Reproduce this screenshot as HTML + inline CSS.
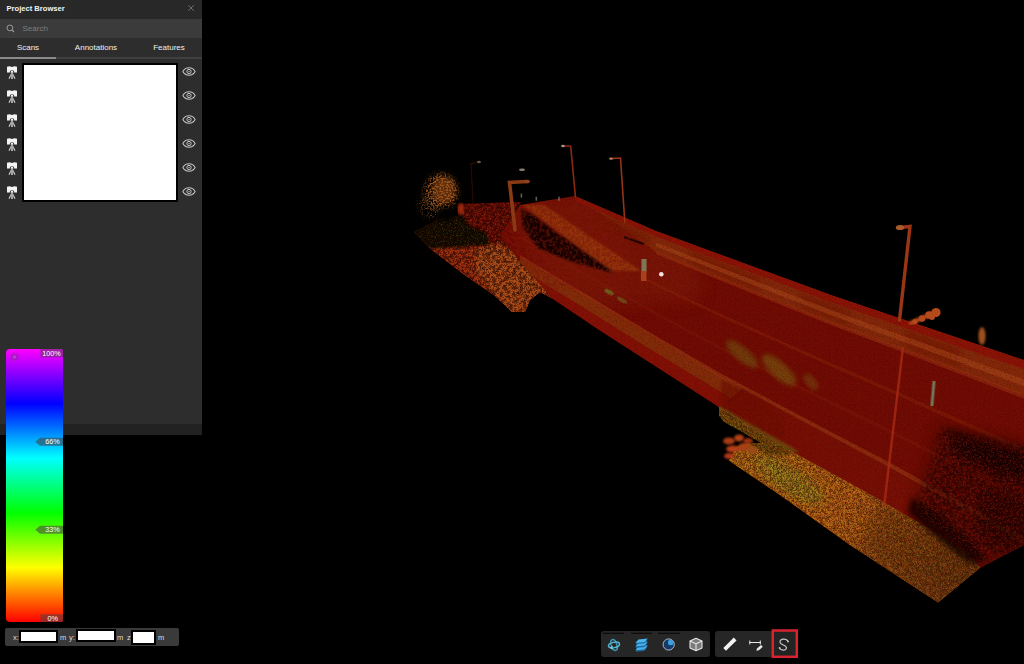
<!DOCTYPE html>
<html>
<head>
<meta charset="utf-8">
<title>Point Cloud Viewer</title>
<style>
html,body{margin:0;padding:0;background:#000;}
body{width:1024px;height:664px;overflow:hidden;position:relative;font-family:"Liberation Sans",sans-serif;color:#fff;}
#scene{position:absolute;left:0;top:0;width:1024px;height:664px;}
#panel{position:absolute;left:0;top:0;width:202px;height:435px;background:#2d2d2d;}
#ptitle{position:absolute;left:6.5px;top:3.7px;font-size:7.6px;font-weight:bold;color:#f2f2f2;line-height:10px;white-space:nowrap;}
#pclose{position:absolute;left:187px;top:3.7px;width:8px;height:8px;}
#psearch{position:absolute;left:0;top:18.5px;width:202px;height:19px;background:#3b3b3b;}
#psearch span{position:absolute;left:22.5px;top:5.2px;font-size:8px;line-height:10px;color:#7d7d7d;}
#ptabs{position:absolute;left:0;top:38px;width:202px;height:20px;}
#ptabs span{position:absolute;top:5px;font-size:8px;line-height:10px;color:#f0f0f0;white-space:nowrap;transform:translateX(-50%);}
#ptabline{position:absolute;left:0;top:57px;width:202px;height:2px;background:#404040;}
#ptabsel{position:absolute;left:0;top:57px;width:56px;height:2px;background:#8a8a8a;}
#pbox{position:absolute;left:22.1px;top:63.2px;width:152px;height:134.500px;background:#fff;border:2.300px solid #000;}
#pfoot{position:absolute;left:0;top:424px;width:202px;height:11px;background:#222;}
.scan{position:absolute;left:6px;width:12px;height:14px;}
.eye{position:absolute;left:182px;width:14px;height:9px;}
#cbar{position:absolute;left:5.5px;top:348.5px;width:57.5px;height:273.5px;border-radius:4px 2px 2px 4px;overflow:hidden;
background:linear-gradient(to bottom,#ff00ff 0%,#0000ff 20%,#00ffff 40%,#00ff00 60%,#ffff00 80%,#ff0000 100%);}
.clab{position:absolute;right:0;font-size:7px;line-height:8px;color:#fff;white-space:nowrap;}
#coords{position:absolute;left:4.5px;top:628.3px;width:174.5px;height:17.6px;background:#3a3a3a;border-radius:2px;font-size:7.5px;color:#ddd;}
#coords span{position:absolute;top:5px;line-height:9px;}
#coords i{position:absolute;display:block;background:#fff;border:2px solid #000;}
.tg{position:absolute;top:630.5px;height:26.3px;background:#262626;border-radius:3px;}
</style>
</head>
<body>
<svg id="scene" width="1024" height="664" viewBox="0 0 1024 664">
<!--SCENE-->

<defs>
<filter id="sp1" x="380" y="120" width="644" height="500" filterUnits="userSpaceOnUse">
  <feTurbulence type="fractalNoise" baseFrequency="0.85" numOctaves="2" seed="3" result="n"/>
  <feColorMatrix in="n" type="matrix" values="0 0 0 0 0  0 0 0 0 0  0 0 0 0 0  5 0 0 0 -2.6" result="a"/>
  <feComposite in="SourceGraphic" in2="a" operator="in"/>
  <feGaussianBlur stdDeviation="0.6"/>
</filter>
<filter id="sp2" x="380" y="120" width="644" height="500" filterUnits="userSpaceOnUse">
  <feTurbulence type="fractalNoise" baseFrequency="0.8" numOctaves="2" seed="11" result="n"/>
  <feColorMatrix in="n" type="matrix" values="0 0 0 0 0  0 0 0 0 0  0 0 0 0 0  6 0 0 0 -2.9" result="a"/>
  <feComposite in="SourceGraphic" in2="a" operator="in"/>
  <feGaussianBlur stdDeviation="0.6"/>
</filter>
<filter id="sp3" x="380" y="120" width="644" height="500" filterUnits="userSpaceOnUse">
  <feTurbulence type="fractalNoise" baseFrequency="0.75" numOctaves="2" seed="21" result="n"/>
  <feColorMatrix in="n" type="matrix" values="0 0 0 0 0  0 0 0 0 0  0 0 0 0 0  6 0 0 0 -3.0" result="a"/>
  <feComposite in="SourceGraphic" in2="a" operator="in"/>
  <feGaussianBlur stdDeviation="0.6"/>
</filter>
<filter id="sp4" x="380" y="120" width="644" height="500" filterUnits="userSpaceOnUse">
  <feTurbulence type="fractalNoise" baseFrequency="0.6" numOctaves="2" seed="5" result="n"/>
  <feColorMatrix in="n" type="matrix" values="0 0 0 0 0  0 0 0 0 0  0 0 0 0 0  5 0 0 0 -2.2" result="a"/>
  <feComposite in="SourceGraphic" in2="a" operator="in"/>
  <feGaussianBlur stdDeviation="0.6"/>
</filter>
<filter id="sp5" x="380" y="120" width="644" height="500" filterUnits="userSpaceOnUse">
  <feTurbulence type="fractalNoise" baseFrequency="0.3" numOctaves="3" seed="9" result="n"/>
  <feColorMatrix in="n" type="matrix" values="0 0 0 0 0  0 0 0 0 0  0 0 0 0 0  7 0 0 0 -3.2" result="a"/>
  <feComposite in="SourceGraphic" in2="a" operator="in"/>
  <feGaussianBlur stdDeviation="0.6"/>
</filter>
<filter id="b1"><feGaussianBlur stdDeviation="1"/></filter>
<filter id="b05"><feGaussianBlur stdDeviation=".55"/></filter>
<filter id="b2"><feGaussianBlur stdDeviation="2.5"/></filter>
<filter id="b4"><feGaussianBlur stdDeviation="5"/></filter>
<filter id="b8"><feGaussianBlur stdDeviation="8"/></filter>
<linearGradient id="vegg" gradientUnits="userSpaceOnUse" x1="740" y1="440" x2="960" y2="585">
  <stop offset="0" stop-color="#aa7618"/><stop offset=".45" stop-color="#b86a16"/><stop offset="1" stop-color="#764a12"/>
</linearGradient>
<clipPath id="roadclip"><polygon points="575.0,196.0 656.0,231.0 831.0,295.0 1024.0,360.0 1024.0,545.0 980.5,567.5 938.0,602.5 850.0,545.0 780.0,495.0 739.0,467.5 721.0,455.0 721.0,422.5 719.0,407.0 600.0,330.5 553.0,299.0 520.0,262.0 500.0,235.0 520.0,205.0"/></clipPath>
<clipPath id="vegclip"><polygon points="719.0,407.0 767.0,438.0 824.0,469.0 882.0,501.0 933.0,531.0 969.0,554.0 980.5,567.5 938.0,602.5 850.0,545.0 780.0,495.0 739.0,467.5 721.0,455.0"/></clipPath>
<clipPath id="leftclip"><polygon points="458.0,204.0 521.0,202.0 500.0,235.0 520.0,262.0 553.0,299.0 540.0,292.0 530.0,300.0 525.0,312.0 512.0,312.0 495.0,296.0 462.5,273.5 430.0,248.5 414.0,232.0 440.0,219.0 458.0,216.0"/></clipPath>
</defs>

<polygon points="575.0,196.0 656.0,231.0 831.0,295.0 1024.0,360.0 1024.0,545.0 980.5,567.5 938.0,602.5 850.0,545.0 780.0,495.0 739.0,467.5 721.0,455.0 721.0,422.5 719.0,407.0 600.0,330.5 553.0,299.0 520.0,262.0 500.0,235.0 520.0,205.0" fill="#6c0a03"/>
<g clip-path="url(#roadclip)">
<polygon points="500.0,196.0 700.0,196.0 700.0,300.0 560.0,310.0" fill="#842008" opacity=".4" filter="url(#b8)"/>
<polygon points="575.0,196.0 600.0,206.8 656.0,231.0 719.0,254.0 780.0,276.3 831.0,295.0 882.0,312.2 940.0,331.7 969.0,341.5 1024.0,360.0 1024.0,395.3 969.0,374.4 940.0,363.4 882.0,341.4 831.0,322.4 780.0,302.1 719.0,277.7 656.0,252.0 620.0,226.0 590.0,207.0 575.0,198.0" fill="#80280a"/>
<polygon points="600.0,213.0 625.0,224.1 650.0,235.1 650.0,247.2 625.0,235.7 600.0,224.1" fill="#6e1405" opacity=".55" filter="url(#b2)"/>
<polygon points="690.0,250.7 725.0,263.9 760.0,277.1 760.0,291.7 725.0,277.8 690.0,263.7" fill="#6e1405" opacity=".55" filter="url(#b2)"/>
<polygon points="800.0,292.2 825.0,301.6 850.0,310.5 850.0,326.8 825.0,317.4 800.0,307.5" fill="#6e1405" opacity=".55" filter="url(#b2)"/>
<polygon points="905.0,329.7 932.5,339.3 960.0,348.9 960.0,367.9 932.5,357.5 905.0,347.2" fill="#6e1405" opacity=".55" filter="url(#b2)"/>
<polygon points="575.0,196.0 600.0,206.8 656.0,231.0 719.0,254.0 780.0,276.3 831.0,295.0 882.0,312.2 940.0,331.7 969.0,341.5 1024.0,360.0 1024.0,369.1 969.0,350.0 940.0,339.9 882.0,319.7 831.0,302.1 780.0,283.0 719.0,260.2 656.0,236.4 600.0,211.8 575.0,200.7" fill="#881206"/>
<polygon points="656.0,242.5 719.0,267.0 780.0,290.4 831.0,310.0 882.0,328.2 940.0,349.1 969.0,359.5 1024.0,379.4 1024.0,386.2 969.0,365.9 940.0,355.2 882.0,333.9 831.0,315.3 780.0,295.4 719.0,271.6 656.0,246.6" fill="#a8481a" opacity=".55" filter="url(#b05)"/>
<polygon points="656.0,251.3 719.0,277.0 780.0,301.2 831.0,321.5 882.0,340.5 940.0,362.4 969.0,373.4 1024.0,394.2 1024.0,398.8 969.0,377.6 940.0,366.5 882.0,344.3 831.0,325.0 780.0,304.5 719.0,280.0 656.0,254.0" fill="#a03a12" opacity=".5" filter="url(#b05)"/>
<polygon points="640.0,275.0 656.0,283.2 719.0,312.9 780.0,340.2 831.0,363.0 882.0,384.9 940.0,410.5 969.0,423.3 1024.0,447.8 1024.0,452.3 969.0,427.5 940.0,414.6 882.0,388.6 831.0,366.5 780.0,343.5 719.0,316.0 656.0,285.9 640.0,277.6" fill="#8c280c" opacity=".45" filter="url(#b05)"/>
<polygon points="745.0,390.3 780.0,409.0 831.0,436.3 882.0,463.2 940.0,495.4 969.0,511.5 1024.0,542.4 1024.0,592.6 969.0,558.3 940.0,540.4 882.0,504.8 831.0,475.1 780.0,445.5 719.0,410.1" fill="#740e05" opacity=".9"/>
<polygon points="520.0,257.8 540.0,269.8 575.0,290.8 600.0,305.8 656.0,339.4 742.0,388.7 731.0,398.4 656.0,353.0 600.0,318.2 575.0,302.6 540.0,280.9 520.0,268.5" fill="#84320b" opacity=".85"/>
<polygon points="520.0,268.5 540.0,280.9 575.0,302.6 600.0,318.2 656.0,353.0 731.0,398.4 719.0,410.1 656.0,369.2 600.0,333.0 575.0,316.9 540.0,294.2 520.0,281.3" fill="#800f05"/>
<polygon points="520.0,255.1 540.0,267.0 575.0,287.8 600.0,302.7 656.0,336.0 719.0,372.6 780.0,404.9 831.0,431.9 882.0,458.5 940.0,490.3 969.0,506.2 1024.0,536.7 1024.0,542.4 969.0,511.5 940.0,495.4 882.0,463.2 831.0,436.3 780.0,409.0 719.0,376.4 656.0,339.4 600.0,305.8 575.0,290.8 540.0,269.8 520.0,257.8" fill="#a04416" opacity=".55" filter="url(#b05)"/>
<polygon points="520.0,236.4 540.0,247.6 575.0,267.1 600.0,281.0 656.0,312.3 719.0,345.8 780.0,375.8 831.0,401.0 882.0,425.5 940.0,454.5 969.0,469.0 1024.0,496.8 1024.0,501.4 969.0,473.2 940.0,458.6 882.0,429.2 831.0,404.5 780.0,379.2 719.0,348.9 656.0,315.0 600.0,283.5 575.0,269.5 540.0,249.8 520.0,238.5" fill="#8c280c" opacity=".25" filter="url(#b05)"/>
<polygon points="719.0,405.0 745.0,420.0 782.0,441.0 800.0,452.0 770.0,452.0 740.0,436.0 719.0,424.0" fill="#6a4a10" opacity=".9" filter="url(#b1)"/>
<polygon points="722.0,380.0 760.0,398.0 784.0,420.0 782.0,441.0 745.0,420.0 719.0,405.0" fill="#6a0d04" opacity=".6" filter="url(#b1)"/>
<polygon points="523.0,205.0 544.0,205.0 641.0,271.0 609.0,271.0" fill="#9a3c10" opacity=".8" filter="url(#b1)"/>
<ellipse cx="742" cy="354" rx="20" ry="7" transform="rotate(40 742 354)" fill="#6e4a10" opacity=".8" filter="url(#b2)"/>
<ellipse cx="779" cy="370" rx="22" ry="8" transform="rotate(42 779 370)" fill="#74500f" opacity=".8" filter="url(#b2)"/>
<ellipse cx="811" cy="382" rx="10" ry="5" transform="rotate(50 811 382)" fill="#74440f" opacity=".7" filter="url(#b2)"/>
<ellipse cx="609" cy="292" rx="5" ry="2.2" transform="rotate(30 609 292)" fill="#6a6a20" opacity=".9" filter="url(#b05)"/>
<ellipse cx="622" cy="300" rx="6" ry="2" transform="rotate(30 622 300)" fill="#6a5a1a" opacity=".8" filter="url(#b05)"/>
<polygon points="624.0,236.0 644.0,243.0 643.0,245.0 624.0,238.0" fill="#150300" filter="url(#b05)"/>
<rect x="480" y="180" width="544" height="440" fill="#4a0803" filter="url(#sp1)" opacity=".3"/>
<rect x="480" y="180" width="544" height="440" fill="#922010" filter="url(#sp2)" opacity=".2"/>
</g>
<polygon points="719.0,407.0 767.0,438.0 824.0,469.0 882.0,501.0 933.0,531.0 969.0,554.0 980.5,567.5 938.0,602.5 850.0,545.0 780.0,495.0 739.0,467.5 721.0,455.0" fill="url(#vegg)" filter="url(#b05)"/>
<g clip-path="url(#vegclip)">
<ellipse cx="790" cy="480" rx="40" ry="12" transform="rotate(33 790 480)" fill="#869020" opacity=".8" filter="url(#b4)"/>
<polygon points="715.0,400.0 782.0,436.0 800.0,452.0 770.0,456.0 740.0,440.0 715.0,428.0" fill="#66500f" filter="url(#b1)"/>
<polygon points="880.0,500.0 969.0,554.0 985.0,570.0 938.0,606.0 860.0,552.0" fill="#1a0c02" opacity=".3" filter="url(#b8)"/>
<rect x="700" y="400" width="324" height="220" fill="#3a1204" filter="url(#sp3)" opacity=".65"/>
<rect x="700" y="400" width="324" height="220" fill="#c08a20" filter="url(#sp1)" opacity=".4"/>
<rect x="700" y="400" width="324" height="220" fill="#8a1a08" filter="url(#sp4)" opacity=".45"/>
<rect x="700" y="400" width="324" height="220" fill="#1a0802" filter="url(#sp5)" opacity=".3"/>
</g>
<polygon points="716.0,412.0 724.0,422.0 742.0,432.0 761.0,443.0 748.0,443.0 736.0,447.0 728.0,462.0 716.0,462.0" fill="#000" filter="url(#b05)"/>
<ellipse cx="729" cy="441" rx="6" ry="3.5" fill="#a83a14" filter="url(#b1)"/>
<ellipse cx="739" cy="438" rx="5" ry="3.5" fill="#b04016" filter="url(#b1)"/>
<ellipse cx="748" cy="441" rx="5" ry="3" fill="#9a3010" filter="url(#b1)"/>
<ellipse cx="733" cy="449" rx="7" ry="3.5" fill="#b43c14" filter="url(#b1)"/>
<ellipse cx="744" cy="447" rx="6" ry="4" fill="#a84018" filter="url(#b1)"/>
<ellipse cx="729" cy="456" rx="5" ry="3" fill="#b03814" filter="url(#b1)"/>
<ellipse cx="752" cy="450" rx="5" ry="4" fill="#9a4a16" filter="url(#b1)"/>
<mask id="dm" maskUnits="userSpaceOnUse" x="860" y="380" width="164" height="240"><polygon points="938.0,428.0 985.0,438.0 1040.0,450.0 1040.0,545.0 980.0,563.0 950.0,541.0 915.0,508.0 925.0,480.0 935.0,455.0" fill="#fff" filter="url(#b4)"/></mask>
<g clip-path="url(#roadclip)">
<polygon points="938.0,428.0 985.0,438.0 1040.0,450.0 1040.0,545.0 980.0,563.0 950.0,541.0 915.0,508.0 925.0,480.0 935.0,455.0" fill="#240401" opacity=".5" filter="url(#b8)"/>
<polygon points="945.0,430.0 1040.0,455.0 1040.0,484.0 995.0,474.0 958.0,454.0" fill="#0a0100" opacity=".85" filter="url(#b4)"/>
<polygon points="912.0,498.0 935.0,510.0 975.0,546.0 988.0,562.0 968.0,562.0 930.0,532.0 908.0,512.0" fill="#0a0100" opacity=".8" filter="url(#b2)"/>
<polygon points="985.0,490.0 1040.0,500.0 1040.0,540.0 1000.0,552.0 975.0,530.0" fill="#0a0100" opacity=".45" filter="url(#b4)"/>
<g mask="url(#dm)"><rect x="860" y="400" width="164" height="200" fill="#8a180a" filter="url(#sp4)" opacity=".5"/>
<rect x="860" y="400" width="164" height="200" fill="#100200" filter="url(#sp5)" opacity=".45"/></g>
</g>
<polygon points="458.0,204.0 521.0,202.0 500.0,235.0 520.0,262.0 553.0,299.0 540.0,292.0 530.0,300.0 525.0,312.0 512.0,312.0 495.0,296.0 462.5,273.5 430.0,248.5 414.0,232.0 440.0,219.0 458.0,216.0" fill="#6c0c04"/>
<g clip-path="url(#leftclip)">
<polygon points="426.0,247.0 490.0,243.0 505.0,250.0 520.0,262.0 553.0,299.0 525.0,313.0 508.0,313.0 490.0,294.0 462.0,274.0" fill="#982a0c"/>
<polygon points="474.0,250.0 500.0,243.0 530.0,262.0 548.0,292.0 527.0,313.0 508.0,313.0 490.0,290.0 476.0,270.0" fill="#a84a16" filter="url(#b2)"/>
<polygon points="400.0,226.0 440.0,212.0 462.0,214.0 470.0,226.0 486.0,232.0 490.0,245.0 426.0,249.0" fill="#0c0702" filter="url(#b1)"/>
<rect x="400" y="190" width="160" height="130" fill="#1c0601" filter="url(#sp3)" opacity=".55"/>
<rect x="400" y="190" width="160" height="130" fill="#c06a22" filter="url(#sp1)" opacity=".3"/>
<rect x="400" y="190" width="160" height="130" fill="#160401" filter="url(#sp5)" opacity=".5"/>
</g>
<ellipse cx="444" cy="190" rx="12" ry="14" fill="#7a3a10" opacity=".75" filter="url(#b2)"/>
<g filter="url(#sp4)"><ellipse cx="441" cy="192" rx="17" ry="19" fill="#9a521c" filter="url(#b2)"/></g>
<g filter="url(#sp1)"><ellipse cx="430" cy="205" rx="12" ry="14" fill="#6a3c14" filter="url(#b2)"/></g>
<ellipse cx="446" cy="214" rx="7" ry="8" fill="#000" opacity=".9" filter="url(#b2)"/>
<ellipse cx="461" cy="209" rx="3" ry="6" fill="#a02a10" opacity=".9" filter="url(#b1)"/>
<polygon points="521.0,209.0 530.0,213.0 560.0,235.0 609.0,269.0 613.0,273.0 570.0,261.0 539.0,249.0 523.0,228.0" fill="#0e0200" opacity=".92" filter="url(#b1)"/>
<g clip-path="url(#roadclip)"><rect x="500" y="200" width="130" height="90" fill="#7a1808" filter="url(#sp5)" opacity=".5"/></g>
<path d="M575.4 196.4 L570.7 146.3 L563 146" stroke="#8a2a10" stroke-width="1.6" fill="none" opacity="1" stroke-linecap="round" filter="url(#b05)"/><ellipse cx="563" cy="146" rx="1.92" ry="1.2" fill="#a89080" opacity="1" filter="url(#b05)"/>
<path d="M624.8 222 L620.5 158 L611 158.6" stroke="#963214" stroke-width="1.6" fill="none" opacity="1" stroke-linecap="round" filter="url(#b05)"/><ellipse cx="611" cy="158.6" rx="1.92" ry="1.2" fill="#b08060" opacity="1" filter="url(#b05)"/>
<path d="M473 203 L471 163.5 L479 162" stroke="#2e0c05" stroke-width="1.3" fill="none" opacity="0.8" stroke-linecap="round" filter="url(#b05)"/><ellipse cx="479" cy="162" rx="1.92" ry="1.2" fill="#807060" opacity="0.8" filter="url(#b05)"/>
<path d="M515 230 L509.5 182.5 L527 181.5" stroke="#8a3a16" stroke-width="3.6" fill="none" opacity="1" stroke-linecap="round" filter="url(#b05)"/><ellipse cx="527" cy="181.5" rx="2.8800000000000003" ry="1.8" fill="#924218" opacity="1" filter="url(#b05)"/>
<ellipse cx="522" cy="169.7" rx="3" ry="1.3" fill="#8a8070" filter="url(#b05)"/>
<path d="M899.5 320 L910 226.5 L900 227.5" stroke="#9a3612" stroke-width="3.4" fill="none" opacity="1" stroke-linecap="round" filter="url(#b05)"/><ellipse cx="900" cy="227.5" rx="4.16" ry="2.6" fill="#a85a2a" opacity="1" filter="url(#b05)"/>
<path d="M903 347 L884 507" stroke="#a82a14" stroke-width="2.4" opacity=".8" filter="url(#b05)"/>
<rect x="520.6" y="193.6" width="1.6" height="4" fill="#7a7060" opacity=".8"/>
<rect x="535.5" y="196.7" width="1.6" height="4" fill="#7a7060" opacity=".8"/>
<rect x="558.2" y="196.7" width="1.6" height="4" fill="#7a7060" opacity=".8"/>
<path d="M911 323 L936 312" stroke="#b04618" stroke-width="4.5" stroke-linecap="round" filter="url(#b1)"/>
<circle cx="936" cy="312.5" r="4.6" fill="#b44a1a" filter="url(#b05)"/>
<circle cx="929" cy="315" r="3.8" fill="#b44a1a" filter="url(#b05)"/>
<circle cx="922" cy="318.5" r="3.2" fill="#b44a1a" filter="url(#b05)"/>
<circle cx="915" cy="321.5" r="2.6" fill="#b44a1a" filter="url(#b05)"/>
<circle cx="932" cy="317" r="3" fill="#b44a1a" filter="url(#b05)"/>
<ellipse cx="982" cy="336" rx="3.6" ry="9" fill="#9c501a" filter="url(#b1)"/>
<rect x="931.5" y="381" width="3" height="25" fill="#74745a" transform="rotate(5 933 393)" filter="url(#b05)"/>
<rect x="641.5" y="259" width="5" height="13" fill="#7a7858" filter="url(#b05)"/>
<rect x="641" y="271" width="5.500" height="10" fill="#a8401a" filter="url(#b05)"/>
<circle cx="661.3" cy="274.3" r="2.3" fill="#f4e4e0"/>
<!--/SCENE-->
</svg>

<div id="panel">
  <div style="position:absolute;left:0;top:0;width:202px;height:18.5px;background:#282828"></div>
  <div id="ptitle">Project Browser</div>
  <svg id="pclose" viewBox="0 0 8 8"><path d="M1.2 1.2L6.8 6.8M6.8 1.2L1.2 6.8" stroke="#6c6c6c" stroke-width="1" fill="none"/></svg>
  <div id="psearch">
    <svg style="position:absolute;left:5.5px;top:5.5px" width="9" height="9" viewBox="0 0 9 9"><circle cx="3.9" cy="3.9" r="2.9" stroke="#9a9a9a" stroke-width="1" fill="none"/><path d="M6 6L8 8" stroke="#9a9a9a" stroke-width="1.1"/></svg>
    <span>Search</span>
  </div>
  <div id="ptabs">
    <span style="left:28px">Scans</span>
    <span style="left:96px">Annotations</span>
    <span style="left:169px">Features</span>
  </div>
  <div id="ptabline"></div><div id="ptabsel"></div>
  <div id="pbox"></div>
  <svg class="scan" style="top:65.5px" viewBox="0 0 12 14"><path d="M1 .8 L3.5 .3 L6 1 L8.500 .3 L11 .8 L11 6.600 L1 6.600Z" fill="#f4f4f4"/><path d="M3.700 6.700 A2.300 2.800 0 0 1 8.300 6.700 Z" fill="#444"/><circle cx="6" cy="5.600" r="1.100" fill="#f0f0f0"/><path d="M5.300 6.300 H6.700 V13 H5.300Z" fill="#ddd"/><path d="M5 8.500 L3 12.800 M7 8.500 L9 12.800" stroke="#d0d0d0" stroke-width="1.100" fill="none"/><path d="M4.200 9.300 H7.800" stroke="#999" stroke-width=".8"/></svg>
<svg class="eye" style="top:67px" viewBox="0 0 14 9"><path d="M.9 4.500 C3.400 -.4 10.600 -.4 13.100 4.500 C10.600 9.400 3.400 9.400 .9 4.500Z" stroke="#c4c4c4" stroke-width="1.050" fill="none"/><circle cx="7" cy="4.500" r="2.150" stroke="#c4c4c4" stroke-width="1" fill="none"/><circle cx="7" cy="4.500" r=".7" fill="#c4c4c4"/></svg>
<svg class="scan" style="top:89.5px" viewBox="0 0 12 14"><path d="M1 .8 L3.5 .3 L6 1 L8.500 .3 L11 .8 L11 6.600 L1 6.600Z" fill="#f4f4f4"/><path d="M3.700 6.700 A2.300 2.800 0 0 1 8.300 6.700 Z" fill="#444"/><circle cx="6" cy="5.600" r="1.100" fill="#f0f0f0"/><path d="M5.300 6.300 H6.700 V13 H5.300Z" fill="#ddd"/><path d="M5 8.500 L3 12.800 M7 8.500 L9 12.800" stroke="#d0d0d0" stroke-width="1.100" fill="none"/><path d="M4.200 9.300 H7.800" stroke="#999" stroke-width=".8"/></svg>
<svg class="eye" style="top:91px" viewBox="0 0 14 9"><path d="M.9 4.500 C3.400 -.4 10.600 -.4 13.100 4.500 C10.600 9.400 3.400 9.400 .9 4.500Z" stroke="#c4c4c4" stroke-width="1.050" fill="none"/><circle cx="7" cy="4.500" r="2.150" stroke="#c4c4c4" stroke-width="1" fill="none"/><circle cx="7" cy="4.500" r=".7" fill="#c4c4c4"/></svg>
<svg class="scan" style="top:113.5px" viewBox="0 0 12 14"><path d="M1 .8 L3.5 .3 L6 1 L8.500 .3 L11 .8 L11 6.600 L1 6.600Z" fill="#f4f4f4"/><path d="M3.700 6.700 A2.300 2.800 0 0 1 8.300 6.700 Z" fill="#444"/><circle cx="6" cy="5.600" r="1.100" fill="#f0f0f0"/><path d="M5.300 6.300 H6.700 V13 H5.300Z" fill="#ddd"/><path d="M5 8.500 L3 12.800 M7 8.500 L9 12.800" stroke="#d0d0d0" stroke-width="1.100" fill="none"/><path d="M4.200 9.300 H7.800" stroke="#999" stroke-width=".8"/></svg>
<svg class="eye" style="top:115px" viewBox="0 0 14 9"><path d="M.9 4.500 C3.400 -.4 10.600 -.4 13.100 4.500 C10.600 9.400 3.400 9.400 .9 4.500Z" stroke="#c4c4c4" stroke-width="1.050" fill="none"/><circle cx="7" cy="4.500" r="2.150" stroke="#c4c4c4" stroke-width="1" fill="none"/><circle cx="7" cy="4.500" r=".7" fill="#c4c4c4"/></svg>
<svg class="scan" style="top:137.5px" viewBox="0 0 12 14"><path d="M1 .8 L3.5 .3 L6 1 L8.500 .3 L11 .8 L11 6.600 L1 6.600Z" fill="#f4f4f4"/><path d="M3.700 6.700 A2.300 2.800 0 0 1 8.300 6.700 Z" fill="#444"/><circle cx="6" cy="5.600" r="1.100" fill="#f0f0f0"/><path d="M5.300 6.300 H6.700 V13 H5.300Z" fill="#ddd"/><path d="M5 8.500 L3 12.800 M7 8.500 L9 12.800" stroke="#d0d0d0" stroke-width="1.100" fill="none"/><path d="M4.200 9.300 H7.800" stroke="#999" stroke-width=".8"/></svg>
<svg class="eye" style="top:139px" viewBox="0 0 14 9"><path d="M.9 4.500 C3.400 -.4 10.600 -.4 13.100 4.500 C10.600 9.400 3.400 9.400 .9 4.500Z" stroke="#c4c4c4" stroke-width="1.050" fill="none"/><circle cx="7" cy="4.500" r="2.150" stroke="#c4c4c4" stroke-width="1" fill="none"/><circle cx="7" cy="4.500" r=".7" fill="#c4c4c4"/></svg>
<svg class="scan" style="top:161.5px" viewBox="0 0 12 14"><path d="M1 .8 L3.5 .3 L6 1 L8.500 .3 L11 .8 L11 6.600 L1 6.600Z" fill="#f4f4f4"/><path d="M3.700 6.700 A2.300 2.800 0 0 1 8.300 6.700 Z" fill="#444"/><circle cx="6" cy="5.600" r="1.100" fill="#f0f0f0"/><path d="M5.300 6.300 H6.700 V13 H5.300Z" fill="#ddd"/><path d="M5 8.500 L3 12.800 M7 8.500 L9 12.800" stroke="#d0d0d0" stroke-width="1.100" fill="none"/><path d="M4.200 9.300 H7.800" stroke="#999" stroke-width=".8"/></svg>
<svg class="eye" style="top:163px" viewBox="0 0 14 9"><path d="M.9 4.500 C3.400 -.4 10.600 -.4 13.100 4.500 C10.600 9.400 3.400 9.400 .9 4.500Z" stroke="#c4c4c4" stroke-width="1.050" fill="none"/><circle cx="7" cy="4.500" r="2.150" stroke="#c4c4c4" stroke-width="1" fill="none"/><circle cx="7" cy="4.500" r=".7" fill="#c4c4c4"/></svg>
<svg class="scan" style="top:185.5px" viewBox="0 0 12 14"><path d="M1 .8 L3.5 .3 L6 1 L8.500 .3 L11 .8 L11 6.600 L1 6.600Z" fill="#f4f4f4"/><path d="M3.700 6.700 A2.300 2.800 0 0 1 8.300 6.700 Z" fill="#444"/><circle cx="6" cy="5.600" r="1.100" fill="#f0f0f0"/><path d="M5.300 6.300 H6.700 V13 H5.300Z" fill="#ddd"/><path d="M5 8.500 L3 12.800 M7 8.500 L9 12.800" stroke="#d0d0d0" stroke-width="1.100" fill="none"/><path d="M4.200 9.300 H7.800" stroke="#999" stroke-width=".8"/></svg>
<svg class="eye" style="top:187px" viewBox="0 0 14 9"><path d="M.9 4.500 C3.400 -.4 10.600 -.4 13.100 4.500 C10.600 9.400 3.400 9.400 .9 4.500Z" stroke="#c4c4c4" stroke-width="1.050" fill="none"/><circle cx="7" cy="4.500" r="2.150" stroke="#c4c4c4" stroke-width="1" fill="none"/><circle cx="7" cy="4.500" r=".7" fill="#c4c4c4"/></svg>

  <div id="pfoot"></div>
</div>

<div id="cbar">
  <svg style="position:absolute;left:0;top:0" width="58" height="275" viewBox="0 0 58 275">
<circle cx="8.500" cy="8" r="4" fill="#8a2a9a" opacity=".55"/><circle cx="8.500" cy="8" r="1.500" fill="#c860d8" opacity=".6"/>
<rect x="34.500" y="0" width="24" height="8.300" fill="#5a3a5a" opacity=".55"/>
<text x="36.300" y="6.900" font-size="7.200" fill="#fff" font-family="Liberation Sans, sans-serif">100%</text>
<path d="M29.300 92.700 L34 88.700 H58 V96.800 H34Z" fill="#3c4a50" opacity=".62"/>
<text x="39.300" y="95.300" font-size="7.200" fill="#fff" font-family="Liberation Sans, sans-serif">66%</text>
<path d="M29.300 180.700 L34 176.700 H58 V184.800 H34Z" fill="#4a5040" opacity=".62"/>
<text x="39.300" y="183.300" font-size="7.200" fill="#fff" font-family="Liberation Sans, sans-serif">33%</text>
<rect x="34.500" y="265.200" width="24" height="9" fill="#5a4040" opacity=".6"/>
<text x="41.500" y="271.800" font-size="7.200" fill="#fff" font-family="Liberation Sans, sans-serif">0%</text>
</svg>
</div>

<div id="coords">
  <span style="left:8.5px">x:</span><i style="left:14.5px;top:1.5px;width:35px;height:9.5px"></i><span style="left:55.5px">m</span>
  <span style="left:64.5px">y:</span><i style="left:71.0px;top:1px;width:36px;height:9px"></i><span style="left:112.5px">m</span>
  <span style="left:122.5px">z</span><i style="left:126.5px;top:1.5px;width:21px;height:11px"></i><span style="left:153.5px">m</span>
</div>

<div class="tg" style="left:600.7px;width:109px"></div>
<div class="tg" style="left:715.3px;width:82px"></div>
<svg style="position:absolute;left:596px;top:624px" width="210" height="40" viewBox="596 624 210 40">
<path d="M603 633.300H624M631 633.300H652M658 633.300H680" stroke="#0c0c0c" stroke-width="1.200"/>
<!-- orbit -->
<g fill="none" stroke-linecap="round">
<ellipse cx="614" cy="645" rx="2.800" ry="5.600" stroke="#3a96b6" stroke-width="1.500" transform="rotate(-18 614 645)"/>
<ellipse cx="614" cy="645" rx="5.600" ry="2.700" stroke="#58b4d4" stroke-width="1.500" transform="rotate(-12 614 645)"/>
<path d="M612.300 646.400 L610.600 647.800 L612.600 649" stroke="#7accdf" stroke-width="1.100"/>
</g>
<!-- layers -->
<g transform="translate(0 .6)">
<path d="M638.400 646.700 L647.700 645.700 L644.700 650.200 L635.400 651.200Z" fill="#1f6a9c"/>
<path d="M638.400 645.700 L647.700 644.700 L644.700 648.700 L635.400 649.700Z" fill="#46b0ee"/>
<path d="M638.400 643 L647.700 642 L644.700 646.300 L635.400 647.300Z" fill="#1f6a9c"/>
<path d="M638.400 642 L647.700 641 L644.700 645 L635.400 646Z" fill="#46b0ee"/>
<path d="M638.400 639.800 L647.700 638.800 L644.700 642.600 L635.400 643.600Z" fill="#1f6a9c"/>
<path d="M638.400 638.900 L647.700 637.900 L644.700 641.500 L635.400 642.500Z" fill="#4ab6f2"/>
</g>
<!-- pie -->
<circle cx="668.700" cy="644.500" r="5.600" fill="#163a66" stroke="#aebccc" stroke-width="1"/>
<path d="M668.700 644.500 L668.700 639.800 A4.700 4.700 0 0 1 673.400 644.500Z" fill="#3ea0e0"/>
<circle cx="670.600" cy="642.600" r="2.600" fill="#3ea0e0"/>
<!-- cube -->
<g fill="none" stroke="#e6e6e6" stroke-width="1.100" stroke-linejoin="round">
<path d="M696 638.200 L702 641 L702 648 L696 650.800 L690 648 L690 641Z" fill="#7a7a7a"/>
<path d="M690 641 L696 643.800 L702 641 M696 643.800 V650.800"/>
</g>
<!-- ruler -->
<path d="M723.300 648 L733.800 637.600 L736.500 640.400 L726 650.800Z" fill="#f2f2f2"/>
<!-- dimension -->
<g stroke="#e8e8e8" stroke-width="1" fill="none">
<path d="M749.500 642.500 H760.500 M749.800 640.500 V644.500 M760.300 640.500 V644.500"/>
</g>
<path d="M756.300 650.800 L757 648.600 L761 645 L762.800 646.800 L759 650.300Z" fill="#e8e8e8"/>
<!-- red box -->
<rect x="772.800" y="630.500" width="24" height="26.300" fill="#232323" stroke="#d8232f" stroke-width="2.500"/>
<path d="M788 641.500 C786.500 638 780 638.500 780 642 C780 645 787 645 786.500 648 C786 651 780.500 650.500 779.500 648" fill="none" stroke="#c4c4c4" stroke-width="1.150" stroke-linecap="round"/>
<circle cx="788" cy="641.500" r=".9" fill="#c4c4c4"/><circle cx="779.600" cy="648" r=".9" fill="#c4c4c4"/>
</svg>
</body>
</html>
